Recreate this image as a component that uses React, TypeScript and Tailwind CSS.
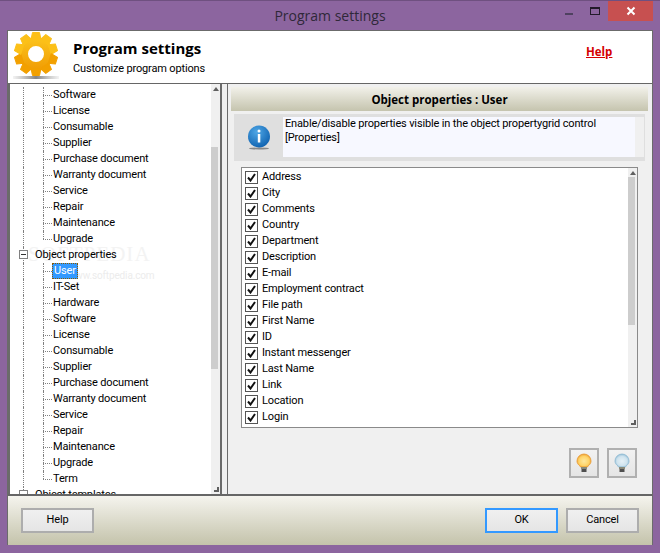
import React from "react";

const beforeRows = ["Software", "License", "Consumable", "Supplier", "Purchase document", "Warranty document", "Service", "Repair", "Maintenance", "Upgrade"];
const afterRows = ["User", "IT-Set", "Hardware", "Software", "License", "Consumable", "Supplier", "Purchase document", "Warranty document", "Service", "Repair", "Maintenance", "Upgrade", "Term"];
const props = ["Address", "City", "Comments", "Country", "Department", "Description", "E-mail", "Employment contract", "File path", "First Name", "ID", "Instant messenger", "Last Name", "Link", "Location", "Login"];

function Gear() {
    const teeth = [0, 36, 72, 108, 144, 180, 216, 252, 288, 324];
    return (
        <svg width="50" height="50" viewBox="0 0 50 50">
            <defs>
                <linearGradient id="gear" gradientUnits="userSpaceOnUse" x1="0" y1="1" x2="0" y2="45">
                    <stop offset="0" stopColor="#fecb21" />
                    <stop offset="1" stopColor="#ee9500" />
                </linearGradient>
                <linearGradient id="shadow" x1="0" y1="0" x2="1" y2="0">
                    <stop offset="0" stopColor="#888" stopOpacity="0.1" />
                    <stop offset="0.5" stopColor="#666" stopOpacity="0.8" />
                    <stop offset="1" stopColor="#888" stopOpacity="0.1" />
                </linearGradient>
            </defs>
            <rect x="2" y="45" width="46" height="3" fill="url(#shadow)" />
            <path
                fillRule="evenodd"
                fill="url(#gear)"
                d="M25 6a17 17 0 1 0 0 34a17 17 0 1 0 0-34zM25 15a8 8 0 1 1 0 16a8 8 0 1 1 0-16z"
            />
            {teeth.map((a) => (
                <g key={a} transform={`translate(25 23) rotate(${a}) translate(-25 -23)`}>
                    <path d="M21.500 1.500h7l1.500 7h-10z" fill={a > 90 && a < 270 ? "#f2a000" : "#fcc018"} stroke={a > 90 && a < 270 ? "#f2a000" : "#fcc018"} strokeLinejoin="round" />
                </g>
            ))}
        </svg>
    );
}

function Bulb({ id, center, glow, edge }: { id: string; center: string; glow: string; edge: string }) {
    return (
        <svg width="16" height="20" viewBox="0 0 16 20">
            <defs>
                <radialGradient id={id} cx="0.5" cy="0.55" r="0.6">
                    <stop offset="0" stopColor={center} />
                    <stop offset="0.6" stopColor={glow} />
                    <stop offset="1" stopColor={edge} />
                </radialGradient>
            </defs>
            <path d="M8 1a7 7 0 0 0-7 7c0 2 1 3.200 2 4.200.8.800 1.500 1.300 1.500 1.800h7c0-.5.700-1 1.500-1.800 1-1 2-2.200 2-4.200a7 7 0 0 0-7-7z" fill={`url(#${id})`} stroke={edge} strokeWidth="0.8" />
            <rect x="5" y="14" width="6" height="2" fill="#8a8a7a" />
            <rect x="5.500" y="16" width="5" height="3" fill="#4f4f4f" />
        </svg>
    );
}

function ScrollBar({ thumbTop, thumbHeight }: { thumbTop: string; thumbHeight: string }) {
    return (
        <div className="w-[9px] shrink-0 bg-[#f0f0f0] flex flex-col items-center justify-between relative z-10">
            <div className={`absolute left-0 w-[7px] bg-[#cdcdcd] ${thumbTop} ${thumbHeight}`} />
            <span className="mt-[3px] w-0 h-0 border-x-[3px] border-x-transparent border-b-[4px] border-b-[#606060] relative" />
            <span className="mb-[2px] ml-[2px] w-[5px] h-[5px] border-r-2 border-b-2 border-[#606060] relative" />
        </div>
    );
}

function TreeLeaf({ label, selected, last }: { label: string; selected?: boolean; last?: boolean }) {
    return (
        <div className="h-4 relative pl-[43px] flex items-center">
            <span className="absolute left-[13px] top-0 bottom-0 border-l border-dotted border-[#808080]" />
            <span className={`absolute left-[33px] top-0 border-l border-dotted border-[#808080] ${last ? "h-2" : "h-4"}`} />
            <span className="absolute left-[33px] w-[9px] top-2 border-t border-dotted border-[#808080]" />
            <span className={selected ? "relative h-4 leading-4 bg-[#3399ff] text-white outline-1 outline-dotted outline-[#8a5a00] -outline-offset-1 px-[2px] -ml-[1px]" : "leading-[14px]"}>{label}</span>
        </div>
    );
}

export default function App() {
    return (
        <div className="w-[660px] h-[553px] bg-[#8c659f] overflow-hidden flex flex-col border-t border-[#6f5080] font-['Roboto',sans-serif] text-[11px] tracking-[-0.15px] text-black">
            {/* title bar */}
            <div className="h-[29px] shrink-0 flex items-start relative tracking-normal">
                <div className="flex-1 text-center font-['Open_Sans'] text-[14px] leading-[29px] text-[#2f2839]">Program settings</div>
                <div className="absolute right-[7px] top-0 flex items-start">
                    <div className="w-[27px] h-[20px] flex justify-center"><span className="mt-[12px] w-2 h-[2px] bg-[#4f4160]" /></div>
                    <div className="w-[26px] h-[20px] flex justify-center"><span className="mt-[6px] w-[10px] h-[8px] border border-t-2 border-[#221a2a]" /></div>
                    <div className="w-[45px] h-[20px] bg-[#c75050] flex items-center justify-center">
                        <svg width="10" height="10" viewBox="0 0 10 10"><path d="M1.500 1.500l7 7M8.500 1.500l-7 7" stroke="#fff" strokeWidth="2" /></svg>
                    </div>
                </div>
            </div>

            <div className="mx-[7px] h-[515px] shrink-0 flex flex-col border-l border-t border-r border-[#6b6b6b] bg-white min-h-0">
                {/* header */}
                <div className="h-[53px] shrink-0 bg-white flex relative border-b border-[#666]">
                    <div className="w-[65px] pl-[3px]"><Gear /></div>
                    <div className="flex flex-col">
                        <div className="font-['Open_Sans'] font-bold text-[15px] tracking-normal leading-[18px] mt-[8px]">Program settings</div>
                        <div className="mt-[4px] leading-[16px]">Customize program options</div>
                    </div>
                    <a className="absolute left-[578px] top-[13px] text-[#d40000] font-['Open_Sans'] font-bold text-[11.500px] tracking-normal underline leading-[16px]">Help</a>
                </div>

                {/* panels */}
                <div className="flex-1 flex min-h-0 bg-[#f0f0f0]">
                    <div className="w-[214px] shrink-0 flex bg-white border-x-2 border-[#6b6b6b] overflow-hidden relative">
                        <div className="absolute left-[18px] top-[158px] text-[#f3f3f3] text-[21px] leading-[24px] tracking-wider font-['Liberation_Serif']">SOFTPEDIA</div>
                        <div className="absolute left-[58px] top-[185px] text-[#ececec] text-[10px] leading-[14px]">www.softpedia.com</div>
                        <div className="flex-1 overflow-hidden relative z-10">
                            <div className="pt-[3px]">
                                {beforeRows.map((r, i) => (
                                    <TreeLeaf key={i} label={r} last={r === "Upgrade"} />
                                ))}
                                <div className="h-4 relative pl-[25px] flex items-center">
                                    <span className="absolute left-[13px] top-0 bottom-0 border-l border-dotted border-[#808080]" />
                                    <span className="absolute left-[9px] top-[3px] w-[9px] h-[9px] border border-[#808080] bg-white flex items-center justify-center"><span className="w-[5px] h-px bg-[#333]" /></span>
                                    <span className="leading-[14px]">Object properties</span>
                                </div>
                                {afterRows.map((r, i) => (
                                    <TreeLeaf key={i} label={r} selected={r === "User"} last={r === "Term"} />
                                ))}
                                <div className="h-4 relative pl-[25px] flex items-center">
                                    <span className="absolute left-[13px] top-0 h-[3px] border-l border-dotted border-[#808080]" />
                                    <span className="absolute left-[9px] top-[3px] w-[9px] h-[9px] border border-[#808080] bg-white" />
                                    <span className="leading-[14px]">Object templates</span>
                                </div>
                            </div>
                        </div>
                        <ScrollBar thumbTop="top-[63px]" thumbHeight="h-[222px]" />
                    </div>

                    <div className="w-[5px] shrink-0" />

                    <div className="flex-1 flex flex-col min-w-0 border-l border-[#6b6b6b] bg-[#f0f0f0]">
                        <div className="mt-[3px] ml-[3px] mr-[4px] h-[24px] pt-[2px] shrink-0 bg-gradient-to-b from-[#f2f1ea] to-[#c5c4ae] flex items-center justify-center font-['Open_Sans'] font-bold text-[11.500px] tracking-normal">Object properties : User</div>
                        <div className="mt-[3px] ml-[6px] mr-[7px] h-[47px] shrink-0 bg-[#dfdfdf] flex pt-[3px] pb-[4px] pr-[1px]">
                            <div className="w-[49px] shrink-0 flex items-center justify-center">
                                <svg width="26" height="27" viewBox="0 0 26 27">
                                    <defs>
                                        <radialGradient id="inf" cx="0.4" cy="0.3" r="0.8">
                                            <stop offset="0" stopColor="#4fa7e6" />
                                            <stop offset="1" stopColor="#0a5cab" />
                                        </radialGradient>
                                    </defs>
                                    <ellipse cx="13" cy="24.500" rx="10" ry="1" fill="#888" />
                                    <circle cx="13" cy="12.500" r="11" fill="url(#inf)" />
                                    <rect x="11.800" y="10" width="2.500" height="8.500" fill="#fff" />
                                    <circle cx="13" cy="7" r="1.500" fill="#fff" />
                                </svg>
                            </div>
                            <div className="flex-1 bg-[#f7f8ff] flex min-w-0">
                                <div className="flex-1 pl-[2px] pr-[20px] leading-[14px]">Enable/disable properties visible in the object propertygrid control [Properties]</div>
                                <div className="w-[9px] bg-[#f0f0f0]" />
                            </div>
                        </div>

                        <div className="mt-[6px] ml-[13px] mr-[14px] h-[261px] shrink-0 bg-white border border-[#8a8a8a] flex overflow-hidden">
                            <div className="flex-1 pl-[3px] pt-px overflow-hidden">
                                {props.map((p) => (
                                    <div key={p} className="h-4 flex items-center">
                                        <span className="w-[13px] h-[13px] border border-[#555] flex items-center justify-center bg-white">
                                            <svg width="9" height="9" viewBox="0 0 9 9"><path d="M1 4.500l2.500 3L8 1" fill="none" stroke="#111" strokeWidth="2" /></svg>
                                        </span>
                                        <span className="ml-[4px]">{p}</span>
                                    </div>
                                ))}
                            </div>
                            <ScrollBar thumbTop="top-[9px]" thumbHeight="h-[148px]" />
                        </div>

                        <div className="flex justify-end gap-2 mr-[15px] mt-[20px]">
                            <button className="w-[30px] h-[30px] border-2 border-[#b0b0b0] bg-gradient-to-b from-[#f2f2f2] to-[#e5e5e5] flex items-center justify-center"><Bulb id="on" center="#ffe9a0" glow="#ffd468" edge="#e8962a" /></button>
                            <button className="w-[30px] h-[30px] border-2 border-[#b0b0b0] bg-gradient-to-b from-[#f2f2f2] to-[#e5e5e5] flex items-center justify-center"><Bulb id="off" center="#e6f1f7" glow="#cfe3ee" edge="#8ab8d2" /></button>
                        </div>
                    </div>
                </div>

                {/* footer */}
                <div className="h-[51px] shrink-0 bg-gradient-to-b from-[#f5f4ee] to-[#c4c3ab] border-t-2 border-[#666] flex items-center pl-[13px] pr-[13px]">
                    <button className="w-[73px] h-[25px] border-2 border-[#adadad] bg-gradient-to-b from-[#f0f0f0] to-[#e5e5e5]">Help</button>
                    <div className="flex-1" />
                    <button className="w-[73px] h-[25px] border-2 border-[#3399ff] bg-gradient-to-b from-[#f0f0f0] to-[#e5e5e5]">OK</button>
                    <button className="ml-2 w-[73px] h-[25px] border-2 border-[#adadad] bg-gradient-to-b from-[#f0f0f0] to-[#e5e5e5]">Cancel</button>
                </div>
            </div>
        </div>
    );
}
